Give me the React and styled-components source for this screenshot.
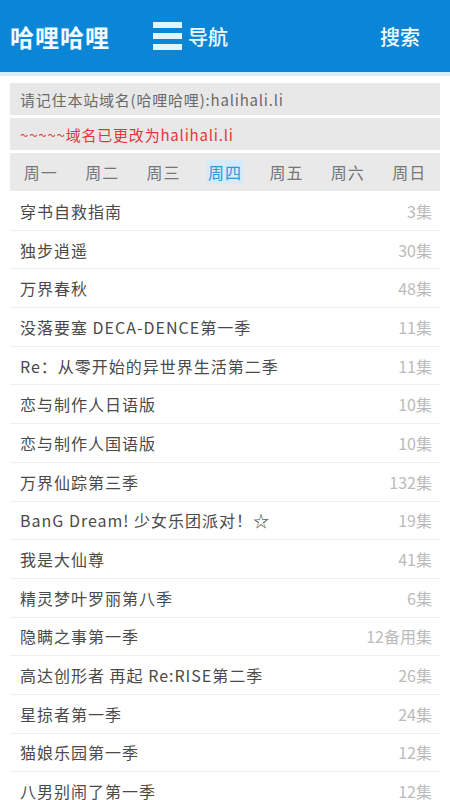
import styled, { createGlobalStyle } from "styled-components";

const GlobalStyle = createGlobalStyle`
  html, body {
    margin: 0;
    padding: 0;
    background: #fff;
    font-family: "Noto Sans CJK SC", "Noto Sans", sans-serif;
  }
`;

const Page = styled.div`
  width: 450px;
  min-height: 800px;
  background: #fff;
  overflow: hidden;
`;

const Header = styled.header`
  height: 72px;
  background: #0b86d7;
  border-bottom: 4px solid #d6eefb;
  display: flex;
  align-items: center;
  padding: 0 30px 0 10px;
  color: #f2fbff;
`;

const Logo = styled.div`
  font-size: 24px;
  font-weight: 700;
  letter-spacing: 1px;
  width: 143px;
`;

const NavButton = styled.div`
  display: flex;
  align-items: center;
  gap: 6px;
  font-size: 20px;
  font-weight: 500;
`;

const Burger = styled.div`
  width: 29px;
  height: 28px;
  display: flex;
  flex-direction: column;
  justify-content: space-between;
  span {
    display: block;
    height: 6px;
    background: #dff6ff;
  }
`;

const Search = styled.div`
  margin-left: auto;
  font-size: 20px;
  font-weight: 500;
`;

const Body = styled.main`
  padding: 7px 10px 0;
  display: flex;
  flex-direction: column;
  gap: 3px;
`;

const Notice = styled.div`
  height: 32px;
  background: #e8e8e8;
  display: flex;
  align-items: center;
  padding: 0 10px;
  font-size: 15px;
  letter-spacing: 0.8px;
  color: ${(p) => (p.$alert ? "#e8333b" : "#6a6a6a")};
`;

const Tabs = styled.div`
  height: 38px;
  background: #e9e9e9;
  display: grid;
  grid-template-columns: repeat(7, 1fr);
  align-items: center;
`;

const Tab = styled.div`
  justify-self: center;
  font-size: 16px;
  letter-spacing: 1px;
  padding: 0 1px;
  color: ${(p) => (p.$active ? "#2f97dd" : "#777")};
  background: ${(p) => (p.$active ? "#d4ebfa" : "transparent")};
`;

const List = styled.ul`
  list-style: none;
  margin: -2px 0 0;
  padding: 0;
`;

const Row = styled.li`
  height: 38.7px;
  box-sizing: border-box;
  border-bottom: 1px solid #efefef;
  display: flex;
  align-items: center;
  justify-content: space-between;
  padding: 0 8px 0 10px;
  font-size: 16px;
  letter-spacing: 1px;
`;

const Title = styled.span`
  color: #4a4a4a;
`;

const Count = styled.span`
  color: #bbb;
  letter-spacing: 0;
`;

const days = ["周一", "周二", "周三", "周四", "周五", "周六", "周日"];

const shows = [
  ["穿书自救指南", "3集"],
  ["独步逍遥", "30集"],
  ["万界春秋", "48集"],
  ["没落要塞 DECA-DENCE第一季", "11集"],
  ["Re：从零开始的异世界生活第二季", "11集"],
  ["恋与制作人日语版", "10集"],
  ["恋与制作人国语版", "10集"],
  ["万界仙踪第三季", "132集"],
  ["BanG Dream! 少女乐团派对！☆", "19集"],
  ["我是大仙尊", "41集"],
  ["精灵梦叶罗丽第八季", "6集"],
  ["隐瞒之事第一季", "12备用集"],
  ["高达创形者 再起 Re:RISE第二季", "26集"],
  ["星掠者第一季", "24集"],
  ["猫娘乐园第一季", "12集"],
  ["八男别闹了第一季", "12集"],
];

export default function App() {
  return (
    <Page>
      <GlobalStyle />
      <Header>
        <Logo>哈哩哈哩</Logo>
        <NavButton>
          <Burger>
            <span />
            <span />
            <span />
          </Burger>
          导航
        </NavButton>
        <Search>搜索</Search>
      </Header>
      <Body>
        <Notice>请记住本站域名(哈哩哈哩):halihali.li</Notice>
        <Notice $alert>~~~~~域名已更改为halihali.li</Notice>
        <Tabs>
          {days.map((d) => (
            <Tab key={d} $active={d === "周四"}>
              {d}
            </Tab>
          ))}
        </Tabs>
        <List>
          {shows.map(([name, count]) => (
            <Row key={name}>
              <Title>{name}</Title>
              <Count>{count}</Count>
            </Row>
          ))}
        </List>
      </Body>
    </Page>
  );
}
